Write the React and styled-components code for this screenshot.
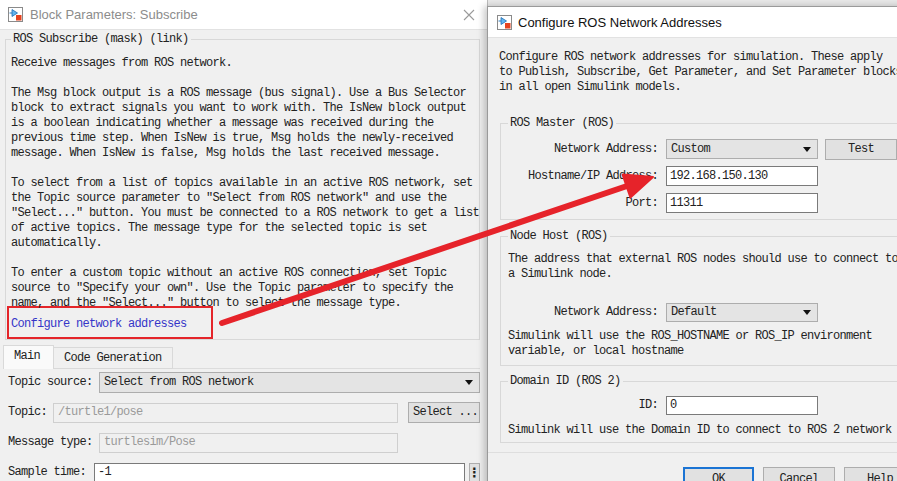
import React from 'react';
import styled, { createGlobalStyle, css } from 'styled-components';

const Global = createGlobalStyle`
  html, body { margin: 0; padding: 0; }
  body { width: 897px; height: 481px; overflow: hidden; background: #e9e9e9; }
`;

const mono = css`
  font-family: "Liberation Mono", "DejaVu Sans Mono", monospace;
  font-size: 12px;
  letter-spacing: -0.7px;
  line-height: 15px;
  color: #222;
`;

const Desktop = styled.div`
  position: relative;
  width: 897px;
  height: 481px;
  overflow: hidden;
`;

const Window = styled.div`
  position: absolute;
  left: ${p => p.$x}px;
  top: ${p => p.$y}px;
  width: ${p => p.$w}px;
  height: ${p => p.$h}px;
  background: #f0f0f0;
  display: flex;
  flex-direction: column;
  box-sizing: border-box;
  ${p => p.$front
    ? css`border-left: 1px solid #9a9a9a; border-top: 1px solid #9a9a9a; box-shadow: -3px 0 7px rgba(0,0,0,0.22);`
    : css`border-right: 1px solid #bdbdbd;`}
`;

const TitleBar = styled.div`
  height: ${p => p.$h}px;
  flex: 0 0 auto;
  background: #fff;
  display: flex;
  align-items: center;
  padding-left: ${p => p.$pl}px;
  gap: ${p => p.$gap}px;
  border-bottom: 1px solid #e2e2e2;
`;

const TitleText = styled.span`
  font-family: "Liberation Sans", Arial, sans-serif;
  font-size: 13px;
  color: ${p => (p.$active ? '#111' : '#8c8c8c')};
  flex: 1;
  white-space: nowrap;
`;

const CloseBtn = styled.div`
  width: 36px;
  height: 100%;
  display: flex;
  align-items: center;
  justify-content: center;
`;

const Group = styled.fieldset`
  margin: ${p => p.$m};
  padding: ${p => p.$p};
  border: 1px solid #d8d8d8;
  min-width: 0;
`;

const Legend = styled.legend`
  ${mono}
  padding: 0 2px;
`;

const Para = styled.p`
  ${mono}
  margin: 0 0 ${p => (p.$last ? 0 : 15)}px;
  white-space: pre;
`;

const LinkBox = styled.div`
  width: 206px;
  box-sizing: border-box;
  margin: -5px 0 0 -4px;
  padding: 5px 2px;
  border: 2px solid #e4252a;
`;

const Link = styled.span`
  ${mono}
  color: #3535c8;
  white-space: pre;
`;

const TabStrip = styled.div`
  display: flex;
  align-items: flex-end;
  margin: 5px 7px 0 3px;
  height: 24px;
`;

const Tab = styled.div`
  ${mono}
  box-sizing: border-box;
  height: ${p => (p.$active ? 24 : 22)}px;
  padding: ${p => (p.$active ? '3px 13px 0 10px' : '3px 10px 0 10px')};
  background: ${p => (p.$active ? '#fafafa' : '#f0f0f0')};
  border: 1px solid #d9d9d9;
  border-bottom: none;
  ${p => !p.$active && css`border-left: none; border-bottom: 1px solid #d9d9d9;`}
  white-space: pre;
`;

const TabFiller = styled.div`
  flex: 1;
  border-bottom: 1px solid #dcdcdc;
`;

const Form = styled.div`
  display: flex;
  flex-direction: column;
  gap: 9px;
  padding: 3px 7px 0 8px;
`;

const Row = styled.div`
  display: flex;
  align-items: center;
  height: 21px;
  gap: ${p => p.$gap ?? 6.5}px;
`;

const Label = styled.span`
  ${mono}
  white-space: pre;
  flex: 0 0 auto;
  margin-right: ${p => p.$mr ?? 0}px;
`;

const Field = styled.div`
  ${mono}
  box-sizing: border-box;
  height: ${p => p.$h ?? 20}px;
  ${p => p.$w ? css`width: ${p.$w}px; flex: 0 0 auto;` : css`flex: 1; min-width: 0;`}
  margin-right: ${p => p.$mr ?? 0}px;
  display: flex;
  align-items: center;
  padding: 0 4px;
  white-space: pre;
  overflow: hidden;
  ${p => {
    if (p.$kind === 'combo') return css`background: #e4e4e4; border: 1px solid #adadad; justify-content: space-between; padding-right: 6px;`;
    if (p.$kind === 'disabled') return css`background: #f0f0f0; border: 1px solid #cfcfcf; color: #9a9a9a;`;
    return css`background: #fff; border: 1px solid #7a7a7a; padding-left: 3px;`;
  }}
`;

const Caret = styled.span`
  width: 0;
  height: 0;
  border-left: 4px solid transparent;
  border-right: 4px solid transparent;
  border-top: 5px solid #111;
  flex: 0 0 auto;
`;

const Button = styled.div`
  ${mono}
  box-sizing: border-box;
  width: ${p => p.$w}px;
  height: ${p => p.$h ?? 21}px;
  flex: 0 0 auto;
  display: flex;
  align-items: center;
  justify-content: ${p => p.$left ? 'flex-start' : 'center'};
  padding-left: ${p => p.$left ? 4 : 0}px;
  margin-left: ${p => p.$ml ?? 0}px;
  background: #e1e1e1;
  border: ${p => (p.$focus ? '2px solid #1b74d4' : '1px solid #adadad')};
  white-space: pre;
`;

const Dots = styled.span`
  font-family: "DejaVu Sans", sans-serif;
  font-size: 13px;
  font-weight: bold;
  line-height: 1;
  letter-spacing: 0;
`;

/* right window */
const Body = styled.div`
  padding: 12px 0 0 11px;
  display: flex;
  flex-direction: column;
`;

const FormGrid = styled.div`
  display: flex;
  flex-direction: column;
  gap: 7px;
`;

const RRow = styled.div`
  display: flex;
  align-items: center;
  height: 20px;
  margin: ${p => p.$m ?? '0'};
`;

const RLabel = styled.span`
  ${mono}
  width: 150px;
  text-align: right;
  white-space: pre;
  flex: 0 0 auto;
  margin-right: 8px;
`;

const Footer = styled.div`
  margin-top: 9px;
  border-top: 1px solid #dedede;
  display: flex;
  gap: 9px;
  padding: 14px 0 0 195px;
`;

const Overlay = styled.svg`
  position: absolute;
  left: 0;
  top: 0;
  pointer-events: none;
`;

const BlockIcon = () => (
  <svg width="15" height="15" viewBox="0 0 15 15">
    <rect x="0.5" y="0.5" width="14" height="14" fill="#fff" stroke="#8a8a8a" />
    <path d="M1.5 6 H4" stroke="#2d7fc4" strokeWidth="1" />
    <path d="M4 2.5 L9.5 6 L4 9.5 Z" fill="#62b4ee" stroke="#1f6db3" strokeWidth="0.8" />
    <rect x="8" y="8" width="5.5" height="5.5" fill="#e5431f" />
  </svg>
);

const CloseIcon = () => (
  <svg width="12" height="12" viewBox="0 0 12 12">
    <path d="M1 1 L11 11 M11 1 L1 11" stroke="#9a9a9a" strokeWidth="1.1" />
  </svg>
);

export default function App() {
  return (
    <Desktop>
      <Global />
      <Window $x={0} $y={0} $w={488} $h={520}>
        <TitleBar $h={29} $pl={8} $gap={7}>
          <BlockIcon />
          <TitleText>Block Parameters: Subscribe</TitleText>
          <CloseBtn><CloseIcon /></CloseBtn>
        </TitleBar>
        <Group $m="2px 7px 0 5px" $p="9px 5px 0 5px">
          <Legend>ROS Subscribe (mask) (link)</Legend>
          <Para>Receive messages from ROS network.</Para>
          <Para>{`The Msg block output is a ROS message (bus signal). Use a Bus Selector
block to extract signals you want to work with. The IsNew block output
is a boolean indicating whether a message was received during the
previous time step. When IsNew is true, Msg holds the newly-received
message. When IsNew is false, Msg holds the last received message.`}</Para>
          <Para>{`To select from a list of topics available in an active ROS network, set
the Topic source parameter to "Select from ROS network" and use the
"Select..." button. You must be connected to a ROS network to get a list
of active topics. The message type for the selected topic is set
automatically.`}</Para>
          <Para $last>{`To enter a custom topic without an active ROS connection, set Topic
source to "Specify your own". Use the Topic parameter to specify the
name, and the "Select..." button to select the message type.`}</Para>
          <LinkBox><Link>Configure network addresses</Link></LinkBox>
        </Group>
        <TabStrip>
          <Tab $active>Main</Tab>
          <Tab>Code Generation</Tab>
          <TabFiller />
        </TabStrip>
        <Form>
          <Row>
            <Label>Topic source:</Label>
            <Field $kind="combo" $h={21}>Select from ROS network<Caret /></Field>
          </Row>
          <Row $gap={6}>
            <Label>Topic:</Label>
            <Field $kind="disabled">/turtle1/pose</Field>
            <Button $w={72} $ml={4} $left>Select ...</Button>
          </Row>
          <Row>
            <Label>Message type:</Label>
            <Field $kind="disabled" $mr={82}>turtlesim/Pose</Field>
          </Row>
          <Row $gap={4}>
            <Label $mr={4}>Sample time:</Label>
            <Field>-1</Field>
            <Button $w={11} $h={20}><Dots>⋮</Dots></Button>
          </Row>
        </Form>
      </Window>

      <Window $x={487} $y={6} $w={440} $h={500} $front>
        <TitleBar $h={30} $pl={9} $gap={6}>
          <BlockIcon />
          <TitleText $active>Configure ROS Network Addresses</TitleText>
        </TitleBar>
        <Body>
          <Para $last>{`Configure ROS network addresses for simulation. These apply
to Publish, Subscribe, Get Parameter, and Set Parameter blocks
in all open Simulink models.`}</Para>
          <Group $m="21px 0 0 1px" $p="8px 7px 6px 7px">
            <Legend>ROS Master (ROS)</Legend>
            <FormGrid>
              <RRow>
                <RLabel>Network Address:</RLabel>
                <Field $kind="combo" $w={152}>Custom<Caret /></Field>
                <Button $w={72} $ml={7}>Test</Button>
              </RRow>
              <RRow>
                <RLabel>Hostname/IP Address:</RLabel>
                <Field $w={152}>192.168.150.130</Field>
              </RRow>
              <RRow>
                <RLabel>Port:</RLabel>
                <Field $w={152}>11311</Field>
              </RRow>
            </FormGrid>
          </Group>
          <Group $m="9px 0 0 1px" $p="8px 7px 6px 7px">
            <Legend>Node Host (ROS)</Legend>
            <Para $last>{`The address that external ROS nodes should use to connect to
a Simulink node.`}</Para>
            <RRow $m="20px 0 7px">
              <RLabel>Network Address:</RLabel>
              <Field $kind="combo" $w={152} $h={19}>Default<Caret /></Field>
            </RRow>
            <Para $last>{`Simulink will use the ROS_HOSTNAME or ROS_IP environment
variable, or local hostname`}</Para>
          </Group>
          <Group $m="8px 0 0 1px" $p="6px 7px 4px 7px">
            <Legend>Domain ID (ROS 2)</Legend>
            <RRow $m="0 0 8px">
              <RLabel>ID:</RLabel>
              <Field $w={152} $h={19}>0</Field>
            </RRow>
            <Para $last>Simulink will use the Domain ID to connect to ROS 2 network</Para>
          </Group>
        </Body>
        <Footer>
          <Button $w={71} $h={24} $focus>OK</Button>
          <Button $w={72} $h={24}>Cancel</Button>
          <Button $w={72} $h={24}>Help</Button>
        </Footer>
      </Window>

      <Overlay width="897" height="481" viewBox="0 0 897 481">
        <path d="M222 323 L627 186" stroke="#e6232a" strokeWidth="6" strokeLinecap="round" />
        <path d="M653 177 L630.4 197.4 L622.6 174.6 Z" fill="#e6232a" stroke="#e6232a" strokeWidth="2" strokeLinejoin="round" />
      </Overlay>
    </Desktop>
  );
}
